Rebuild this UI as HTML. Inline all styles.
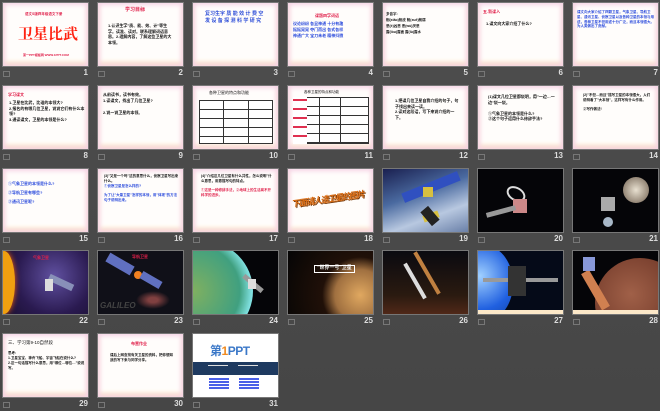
<!DOCTYPE html>
<html><head><meta charset="utf-8"><style>
*{margin:0;padding:0;box-sizing:border-box}
body{width:660px;height:411px;background:linear-gradient(#4d4d4d,#464646);overflow:hidden;position:relative;font-family:"Liberation Sans","Noto Sans CJK SC",sans-serif}
.s{position:absolute;width:85px;height:63px;background:#fff;overflow:hidden;outline:1px solid #777}
.l{background:#fffdfb;box-shadow:inset 0 0 5px 2px #f6d3e6,inset 0 -4px 5px #fbe3c2}
.n{position:absolute;width:85px;text-align:right;color:#ddd;font-size:8px;font-weight:bold}
.n::before{content:"";position:absolute;left:0;top:3px;width:5px;height:4px;border:1px solid #777}
.t{position:absolute;font-size:4px;line-height:5.5px;color:#111;font-weight:bold}
.r{color:#e0204a}.b{color:#2a4adc}
</style></head><body>

<!-- row1 -->
<div class="s l" style="left:3px;top:3px"><div class="t r" style="left:22px;top:9px;font-size:3.5px">语文S版四年级语文下册</div><div style="position:absolute;left:15px;top:20px;font-size:15px;color:#f21;font-weight:bold;font-family:'Noto Serif CJK SC',serif">卫星比武</div><div class="t r" style="left:20px;top:50px;font-size:3px">第一PPT模板网 WWW.1PPT.COM</div></div>
<div class="s l" style="left:98px;top:3px"><div class="t r" style="left:27px;top:5px;font-size:5px">学习目标</div><div class="t" style="left:10px;top:20px;width:66px">1.认识生字"质、能、效、计"等生字。读准、读对。联系理解词语意思。2.理解内容，了解这些卫星的大本领。</div></div>
<div class="s l" style="left:193px;top:3px"><div class="t b" style="left:12px;top:8px;width:60px;font-size:5px;line-height:7px;color:#3050d8">复习生字 质 能 效 计 费 空 发 设 备 探 测 科 学 研 究</div></div>
<div class="s l" style="left:288px;top:3px"><div class="t r" style="left:27px;top:10px">课题四字词语</div><div class="t b" style="left:5px;top:18px;width:80px;line-height:6px">议论纷纷 各显神通 十分有趣<br>摇摇晃晃 夺门而出 各式各样<br>神通广大 宝刀未老 精神抖擞</div></div>
<div class="s l" style="left:383px;top:3px"><div class="t" style="left:3px;top:8px;width:80px;font-size:3.5px;line-height:6px">多音字:<br>削(xiāo)削皮 削(xuē)削弱<br>恶(è)凶恶 恶(wù)厌恶<br>露(lòu)露面 露(lù)露水</div></div>
<div class="s l" style="left:478px;top:3px"><div class="t r" style="left:5px;top:6px">五.新课入</div><div class="t" style="left:8px;top:18px">1.课文向大家介绍了什么?</div></div>
<div class="s l" style="left:573px;top:3px"><div class="t b" style="left:4px;top:7px;width:78px;font-size:3.5px;line-height:4.8px">课文向大家介绍了四颗卫星，气象卫星、导航卫星、通讯卫星、侦察卫星以及各种卫星的本领与用途，各种卫星不但用途十分广泛，而且本领很大。为人类做出了贡献。</div></div>
<div class="n" style="left:3px;top:68px">1</div><div class="n" style="left:98px;top:68px">2</div><div class="n" style="left:193px;top:68px">3</div><div class="n" style="left:288px;top:68px">4</div><div class="n" style="left:383px;top:68px">5</div><div class="n" style="left:478px;top:68px">6</div><div class="n" style="left:573px;top:68px">7</div>

<!-- row2 -->
<div class="s l" style="left:3px;top:86px"><div class="t r" style="left:5px;top:6px;font-size:4px">学习课文</div><div class="t" style="left:6px;top:14px;width:76px;line-height:5.5px">1.卫星在比武，比谁的本领大?<br>2.报名的有哪几位卫星，说说它们有什么本领?<br>3.通读课文，卫星的本领是什么?</div></div>
<div class="s l" style="left:98px;top:86px"><div class="t" style="left:5px;top:6px;width:78px;line-height:6px">从前读书，读书有效。<br>1.读课文，找出了几位卫星?<br><br>2.说一说卫星的本领。</div></div>
<div class="s l" style="left:193px;top:86px"><div class="t" style="left:16px;top:4px;font-weight:normal;font-size:4px">各种卫星的特点和功能</div><div style="position:absolute;left:6px;top:14px;width:74px;height:44px;border:1px solid #333;background:repeating-linear-gradient(#fff 0 8px,#333 8px 9px)"></div><div style="position:absolute;left:30px;top:14px;width:1px;height:44px;background:#333"></div><div style="position:absolute;left:55px;top:14px;width:1px;height:44px;background:#333"></div></div>
<div class="s l" style="left:288px;top:86px"><div class="t" style="left:16px;top:4px;font-weight:normal;font-size:3.5px">各种卫星的特点和功能</div><div style="position:absolute;left:5px;top:11px;width:76px;height:47px;border:1px solid #333;background:repeating-linear-gradient(#fff 0 8px,#333 8px 9px)"></div><div style="position:absolute;left:5px;top:11px;width:14px;height:47px;background:repeating-linear-gradient(#fff 0 2px,#e03050 2px 4px,#fff 4px 9px)"></div><div style="position:absolute;left:31px;top:11px;width:1px;height:47px;background:#333"></div><div style="position:absolute;left:52px;top:11px;width:1px;height:47px;background:#333"></div></div>
<div class="s l" style="left:383px;top:86px"><div class="t" style="left:12px;top:12px;width:66px">1.把课几位卫星自我介绍的句子，句子找出来读一读。<br>2.读对这段话，写下来说介绍的一下。</div></div>
<div class="s l" style="left:478px;top:86px"><div class="t" style="left:10px;top:8px;width:70px;line-height:5.5px">(1)课文几位卫星都说明，用"一边…一边"说一说。<br><br>①气象卫星的本领是什么?<br>②这个句子运用什么修辞手法?</div></div>
<div class="s l" style="left:573px;top:86px"><div class="t" style="left:10px;top:7px;width:70px;font-size:3.5px;line-height:4.8px">(2)"不但…而且"描写卫星的本领很大，人们说明看了"大本领"，这样写有什么作用。<br><br>②写作做法!</div></div>
<div class="n" style="left:3px;top:151px">8</div><div class="n" style="left:98px;top:151px">9</div><div class="n" style="left:193px;top:151px">10</div><div class="n" style="left:288px;top:151px">11</div><div class="n" style="left:383px;top:151px">12</div><div class="n" style="left:478px;top:151px">13</div><div class="n" style="left:573px;top:151px">14</div>

<!-- row3 -->
<div class="s l" style="left:3px;top:169px"><div class="t b" style="left:5px;top:10px;width:76px;line-height:9px">①气象卫星的本领是什么?<br>②导航卫星有哪些?<br>③通讯卫星呢?</div></div>
<div class="s l" style="left:98px;top:169px"><div class="t" style="left:6px;top:5px;width:76px;font-size:3.5px;line-height:4.8px">(3)"又是一个吗"这的意思什么，侦察卫星写出来什么。<br><span class="b">①侦察卫星是怎么样的?</span><br><br><span class="b">为了让"大量卫星"怎样的本领，用"体现"的方法句子说明出来。</span></div></div>
<div class="s l" style="left:193px;top:169px"><div class="t" style="left:8px;top:5px;width:72px;font-size:3.5px;line-height:4.8px">(4)"介绍这几位卫星有什么共性，怎么说明"什么意思，用意描写句的特点。<br><br><span class="r">①这是一种修辞手法，②地球上的生活离不开科学的进步。</span></div></div>
<div class="s l" style="left:288px;top:169px"><div style="position:absolute;left:3px;top:24px;font-size:8.5px;font-weight:bold;font-style:italic;color:#d96a10;transform:rotate(-8deg);letter-spacing:-1.2px;white-space:nowrap;text-shadow:1px 1px 0 #7a3a08">下面请人造卫星的图片</div></div>
<div class="s" style="left:383px;top:169px;background:linear-gradient(160deg,#1a2050 0%,#4a6aa0 40%,#b8c8e0 70%,#6a80a8 100%)"><div style="position:absolute;left:18px;top:13px;width:60px;height:10px;background:#3050c0;transform:rotate(-22deg)"></div><div style="position:absolute;left:40px;top:18px;width:10px;height:10px;background:#d8c040"></div><div style="position:absolute;left:40px;top:44px;width:16px;height:7px;background:#d8c040;transform:rotate(-20deg)"></div><div style="position:absolute;left:42px;top:38px;width:10px;height:18px;background:#222;transform:rotate(-40deg)"></div></div>
<div class="s" style="left:478px;top:169px;background:#050508"><div style="position:absolute;left:28px;top:18px;width:20px;height:14px;border:2px solid #ddd;border-radius:50%;transform:rotate(30deg)"></div><div style="position:absolute;left:35px;top:30px;width:14px;height:14px;background:#c88"></div><div style="position:absolute;left:8px;top:40px;width:30px;height:5px;background:#999;transform:rotate(-15deg)"></div></div>
<div class="s" style="left:573px;top:169px;background:#050508"><div style="position:absolute;left:50px;top:8px;width:26px;height:26px;border-radius:50%;background:radial-gradient(#e8e0d0,#706050)"></div><div style="position:absolute;left:28px;top:28px;width:14px;height:14px;background:#aaa"></div><div style="position:absolute;left:30px;top:48px;width:10px;height:10px;border-radius:50%;background:#a8b8c8"></div></div>
<div class="n" style="left:3px;top:234px">15</div><div class="n" style="left:98px;top:234px">16</div><div class="n" style="left:193px;top:234px">17</div><div class="n" style="left:288px;top:234px">18</div><div class="n" style="left:383px;top:234px">19</div><div class="n" style="left:478px;top:234px">20</div><div class="n" style="left:573px;top:234px">21</div>

<!-- row4 -->
<div class="s" style="left:3px;top:251px;background:radial-gradient(circle at 60% 40%,#6050a0,#2a1a50 60%,#1a1030)"><div style="position:absolute;left:-10px;top:0;width:22px;height:63px;border-radius:50%;background:#f0a010;box-shadow:0 0 6px #f06010"></div><div style="position:absolute;left:45px;top:28px;width:26px;height:7px;background:#8890b8;transform:rotate(25deg)"></div><div style="position:absolute;left:42px;top:28px;width:8px;height:12px;background:#ddd"></div><div class="t r" style="left:30px;top:4px">气象卫星</div></div>
<div class="s" style="left:98px;top:251px;background:#101018"><div style="position:absolute;left:8px;top:8px;width:28px;height:10px;background:#6070c0;transform:rotate(30deg)"></div><div style="position:absolute;left:36px;top:20px;width:8px;height:8px;border-radius:50%;background:#f08020"></div><div style="position:absolute;left:42px;top:25px;width:22px;height:8px;background:#6070c0;transform:rotate(30deg)"></div><div style="position:absolute;left:38px;top:40px;width:34px;height:18px;background:radial-gradient(#804040 20%,transparent 70%)"></div><div style="position:absolute;left:2px;top:50px;font-size:8px;font-style:italic;color:#444;font-weight:bold">GALILEO</div><div class="t r" style="left:34px;top:3px">导航卫星</div></div>
<div class="s" style="left:193px;top:251px;background:#050508"><div style="position:absolute;left:-40px;top:-10px;width:100px;height:100px;border-radius:50%;background:radial-gradient(circle at 40% 50%,#80b060,#40a080 60%,#80e0e0 75%,#60c0e0)"></div><div style="position:absolute;left:48px;top:30px;width:24px;height:5px;background:#999;transform:rotate(40deg)"></div><div style="position:absolute;left:55px;top:28px;width:8px;height:10px;background:#ddd"></div></div>
<div class="s" style="left:288px;top:251px;background:radial-gradient(circle at 85% 70%,#e0a860,#a07040 30%,#201008 45%,#050505)"><div class="t" style="left:26px;top:14px;color:#fff;font-size:5px;border:1px solid #fff;padding:0 2px">"世界一号"卫星</div></div>
<div class="s" style="left:383px;top:251px;background:linear-gradient(#0a0a10,#2a1a10 70%,#502818)"><div style="position:absolute;left:20px;top:20px;width:48px;height:4px;background:#c08040;transform:rotate(60deg)"></div><div style="position:absolute;left:30px;top:10px;width:4px;height:40px;background:#ddd;transform:rotate(-30deg)"></div></div>
<div class="s" style="left:478px;top:251px;background:#050a18"><div style="position:absolute;left:-20px;top:-5px;width:55px;height:75px;border-radius:50%;background:radial-gradient(circle at 40% 40%,#a0d0ff,#2060e0 60%,#1040a0)"></div><div style="position:absolute;left:5px;top:27px;width:75px;height:4px;background:#999"></div><div style="position:absolute;left:30px;top:15px;width:18px;height:30px;background:#333"></div><div style="position:absolute;left:0;top:59px;width:85px;height:4px;background:#fce8c8"></div></div>
<div class="s" style="left:573px;top:251px;background:#050508"><div style="position:absolute;left:22px;top:7px;width:90px;height:90px;border-radius:50%;background:radial-gradient(circle at 40% 40%,#a06048,#703828 70%)"></div><div style="position:absolute;left:18px;top:18px;width:9px;height:42px;background:#d08050;transform:rotate(-30deg)"></div><div style="position:absolute;left:10px;top:6px;width:12px;height:14px;background:#8898d8"></div><div style="position:absolute;left:0;top:59px;width:85px;height:4px;background:#fce8c8"></div></div>
<div class="n" style="left:3px;top:316px">22</div><div class="n" style="left:98px;top:316px">23</div><div class="n" style="left:193px;top:316px">24</div><div class="n" style="left:288px;top:316px">25</div><div class="n" style="left:383px;top:316px">26</div><div class="n" style="left:478px;top:316px">27</div><div class="n" style="left:573px;top:316px">28</div>

<!-- row5 -->
<div class="s l" style="left:3px;top:334px"><div class="t" style="left:5px;top:6px;font-size:4.5px;font-weight:normal">三、学习第9-10自然段</div><div class="t" style="left:5px;top:17px;width:78px;font-size:3.5px;line-height:5px">思考:<br>1.卫星宝宝、神舟飞船、宇宙飞船在说什么?<br>2.这一句话描写什么意思，用"哪位…哪位…"说说写。</div></div>
<div class="s l" style="left:98px;top:334px"><div class="t r" style="left:33px;top:7px">布置作业</div><div class="t" style="left:12px;top:19px;width:64px;font-size:3.5px;line-height:4.5px">课后上网查找有关卫星的资料，把你想知道的写下来与同学分享。</div></div>
<div class="s" style="left:193px;top:334px;background:#fff"><div style="position:absolute;left:17px;top:8px;font-size:12px;color:#3b78c8;font-weight:bold;letter-spacing:-0.5px">第<span style="color:#f08a20">1</span>PPT</div><div style="position:absolute;left:0;top:28px;width:85px;height:13px;background:#1e3a60"></div><div style="position:absolute;left:16px;top:44px;width:20px;height:12px;background:repeating-linear-gradient(#4a60e8 0 2px,#fff 2px 3px)"></div><div style="position:absolute;left:46px;top:44px;width:20px;height:12px;background:repeating-linear-gradient(#4a60e8 0 2px,#fff 2px 3px)"></div><div style="position:absolute;left:15px;top:31px;width:20px;height:1px;background:#ddd"></div><div style="position:absolute;left:45px;top:31px;width:20px;height:1px;background:#ddd"></div></div>
<div class="n" style="left:3px;top:399px">29</div><div class="n" style="left:98px;top:399px">30</div><div class="n" style="left:193px;top:399px">31</div>

</body></html>
